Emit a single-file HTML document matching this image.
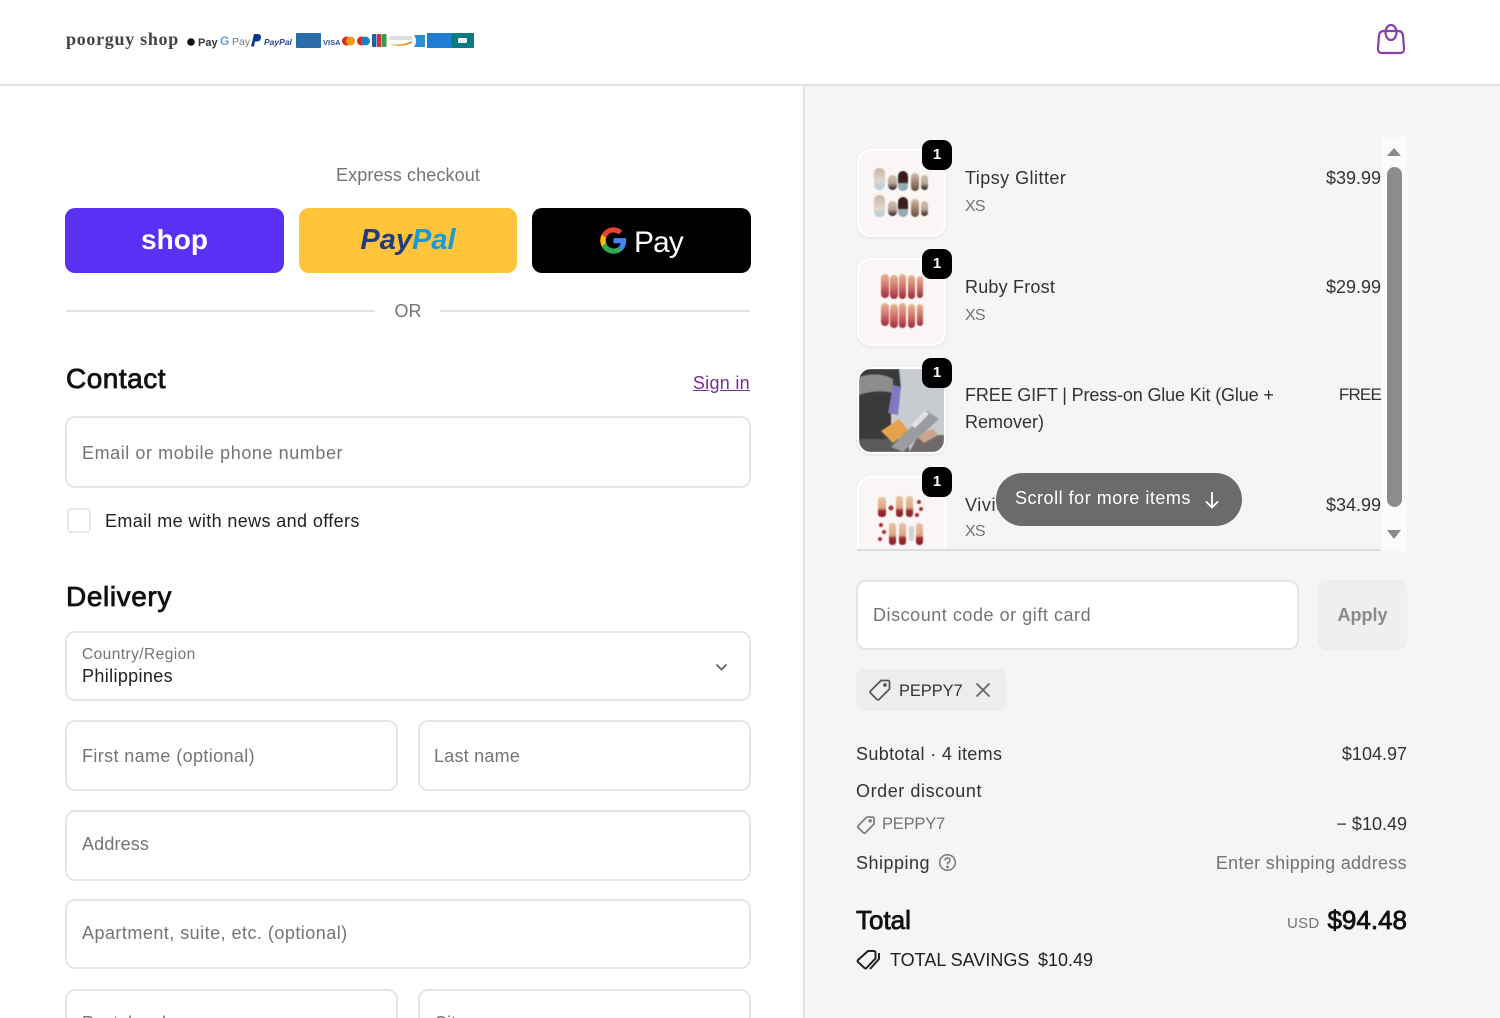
<!DOCTYPE html>
<html lang="en"><head><meta charset="utf-8"><title>Checkout</title>
<style>
html,body{margin:0;padding:0;width:1500px;height:1018px;overflow:hidden;background:#fff}
body{position:relative;font-family:"Liberation Sans",sans-serif;color:#222}
.a{position:absolute}
.t{position:absolute;white-space:nowrap;line-height:24px;font-size:18px;color:#333;filter:blur(.25px)}
.g{color:#747474}
.b{position:absolute;box-sizing:border-box;background:#fff;border:2px solid #e6e6e6;border-radius:10px}
.r{text-align:right}
.h{font-size:28px;color:#111;line-height:34px;-webkit-text-stroke:.8px #111}
.th{position:absolute;left:857px;width:89px;box-sizing:border-box;background:#fbf6f6;border:2px solid #fff;border-radius:14px;box-shadow:0 1px 3px #e2e2e2;overflow:hidden}
.th svg{display:block;filter:blur(.5px)}
.q{position:absolute;left:922px;width:30px;height:30px;background:#000;border-radius:9px;color:#fff;font-weight:700;font-size:15px;line-height:30px;text-align:center}
</style></head><body>

<div class="a" style="left:805px;top:84px;width:695px;height:934px;background:#f5f5f5"></div>
<div class="a" style="left:803px;top:84px;width:2px;height:934px;background:#e3e3e3"></div>
<div class="a" style="left:0;top:84px;width:1500px;height:2px;background:#e3e3e3"></div>

<!-- Header -->
<div class="t" style="left:66px;top:27px;font:700 18px/24px 'Liberation Serif',serif;color:#444;letter-spacing:.7px">poorguy shop</div>
<svg class="a" style="left:186px;top:30px" width="290" height="20" viewBox="0 0 290 20">
<circle cx="5" cy="12" r="3.8" fill="#111"/>
<text x="12" y="16" font-family="Liberation Sans" font-size="11" font-weight="700" fill="#333">Pay</text>
<text x="34" y="15" font-family="Liberation Sans" font-size="12" font-weight="700" fill="#6a9fd8">G</text>
<text x="46" y="15" font-family="Liberation Sans" font-size="10.500" fill="#777">Pay</text>
<path d="M68 4h4q3 0 3 3.500t-4 4h-2l-1 5h-3z" fill="#0a3a8f"/>
<text x="78" y="15" font-family="Liberation Sans" font-size="8.500" font-weight="700" font-style="italic" fill="#24449c">PayPal</text>
<rect x="110" y="3" width="25" height="15" rx="1" fill="#2a6ca8"/>
<text x="137" y="15" font-family="Liberation Sans" font-size="7.500" font-weight="700" fill="#2b4a9c">VISA</text>
<circle cx="160.500" cy="11" r="4.500" fill="#d9281f"/><circle cx="164.500" cy="11" r="4.500" fill="#f39a1d"/>
<circle cx="175.500" cy="11" r="4.500" fill="#d9281f"/><circle cx="179.500" cy="11" r="4.500" fill="#1a7fc8"/>
<rect x="186" y="4" width="4.500" height="13" rx="1" fill="#1f5fa8"/><rect x="191" y="4" width="4.500" height="13" rx="1" fill="#d32f3a"/><rect x="196" y="4" width="4.500" height="13" rx="1" fill="#3a9a4a"/>
<rect x="204" y="6" width="22" height="4" fill="#ddd"/><path d="M204 14q12 2 22-3v2q-12 5-22 1z" fill="#f08a24"/>
<path d="M228 5h11v12h-11q4-6 0-12z" fill="#2d8fd0"/>
<rect x="241" y="3" width="24" height="15" fill="#1f7fd6"/>
<rect x="265" y="3" width="23" height="15" rx="1" fill="#0b7a82"/><rect x="272" y="8" width="9" height="5" rx="1" fill="#e6f4f4"/>
</svg>
<svg class="a" style="left:1375px;top:23px" width="32" height="34" viewBox="0 0 32 34" fill="none" stroke="#8a3fae" stroke-width="2.200">
<path d="M9 8h14q4.500 0 5 4.500l1 13q.3 4.500-4 4.500H7q-4.300 0-4-4.500l1-13Q4.500 8 9 8z"/>
<ellipse cx="16" cy="9.500" rx="5.500" ry="7.500"/>
</svg>

<!-- Express -->
<div class="t g" style="left:66px;width:684px;text-align:center;top:163px;letter-spacing:.12px">Express checkout</div>
<div class="a" style="left:65px;top:208px;width:219px;height:65px;background:#5a31f4;border-radius:10px"></div>
<div class="t" style="left:65px;width:219px;text-align:center;top:222px;font-size:28px;line-height:36px;font-weight:700;color:#fff">shop</div>
<div class="a" style="left:299px;top:208px;width:218px;height:65px;background:#ffc439;border-radius:10px"></div>
<div class="t" style="left:299px;width:218px;text-align:center;top:222px;font-size:29px;line-height:36px;font-weight:700;font-style:italic;color:#253b80">Pay<span style="color:#179bd7">Pal</span></div>
<div class="a" style="left:532px;top:208px;width:219px;height:65px;background:#000;border-radius:10px"></div>
<svg class="a" style="left:599px;top:226px" width="29" height="29" viewBox="0 0 48 48">
<path fill="#4285f4" d="M45 24.500c0-1.600-.1-3-.4-4.500H24v8.500h11.800a10 10 0 0 1-4.400 6.600v5.500h7.100c4.200-3.800 6.500-9.500 6.500-16.100z"/>
<path fill="#34a853" d="M24 46c5.900 0 10.900-2 14.500-5.400l-7.100-5.500c-2 1.300-4.500 2.100-7.400 2.100-5.700 0-10.500-3.800-12.200-9H4.500v5.700A22 22 0 0 0 24 46z"/>
<path fill="#fbbc04" d="M11.800 28.200a13 13 0 0 1 0-8.400v-5.700H4.500a22 22 0 0 0 0 19.800z"/>
<path fill="#ea4335" d="M24 10.800c3.200 0 6.100 1.100 8.400 3.300l6.300-6.300A22 22 0 0 0 4.500 14.100l7.300 5.700c1.700-5.200 6.500-9 12.200-9z"/>
</svg>
<div class="t" style="left:634px;top:224px;font-size:30px;line-height:38px;color:#fff;letter-spacing:-1px">Pay</div>

<div class="a" style="left:66px;top:310px;width:309px;height:2px;background:#e3e3e3"></div>
<div class="a" style="left:440px;top:310px;width:310px;height:2px;background:#e3e3e3"></div>
<div class="t g" style="left:66px;width:684px;text-align:center;top:299px">OR</div>

<!-- Contact -->
<div class="t h" style="left:66px;top:362px;letter-spacing:.5px">Contact</div>
<div class="t" style="right:750px;top:371px;color:#7b2d9e;text-decoration:underline;letter-spacing:.3px">Sign in</div>
<div class="b" style="left:65px;top:416px;width:686px;height:72px"></div>
<div class="t g" style="left:82px;top:441px;letter-spacing:.57px">Email or mobile phone number</div>
<div class="a" style="left:67px;top:508px;width:24px;height:25px;box-sizing:border-box;border:2px solid #e8e8e8;border-radius:4px;background:#fff"></div>
<div class="t" style="left:105px;top:509px;color:#222;letter-spacing:.38px">Email me with news and offers</div>

<!-- Delivery -->
<div class="t h" style="left:66px;top:580px;letter-spacing:.6px">Delivery</div>
<div class="b" style="left:65px;top:631px;width:686px;height:70px"></div>
<div class="t g" style="left:82px;top:643px;font-size:15.500px;letter-spacing:.43px">Country/Region</div>
<div class="t" style="left:82px;top:664px;color:#222;letter-spacing:.36px">Philippines</div>
<svg class="a" style="left:714px;top:661px" width="15" height="13" viewBox="0 0 15 13" fill="none" stroke="#666" stroke-width="1.800"><path d="M2.500 3.500l5 5 5-5"/></svg>
<div class="b" style="left:65px;top:720px;width:333px;height:71px"></div>
<div class="t g" style="left:82px;top:744px;letter-spacing:.38px">First name (optional)</div>
<div class="b" style="left:418px;top:720px;width:333px;height:71px"></div>
<div class="t g" style="left:434px;top:744px;letter-spacing:.22px">Last name</div>
<div class="b" style="left:65px;top:810px;width:686px;height:71px"></div>
<div class="t g" style="left:82px;top:832px;letter-spacing:.15px">Address</div>
<div class="b" style="left:65px;top:899px;width:686px;height:70px"></div>
<div class="t g" style="left:82px;top:921px;letter-spacing:.47px">Apartment, suite, etc. (optional)</div>
<div class="b" style="left:65px;top:989px;width:333px;height:71px"></div>
<div class="t g" style="left:82px;top:1011px">Postal code</div>
<div class="b" style="left:418px;top:989px;width:333px;height:71px"></div>
<div class="t g" style="left:434px;top:1011px">City</div>

<!-- Scroll list -->
<div class="a" style="left:1381px;top:137px;width:26px;height:414px;background:#fbfbfb"></div>
<svg class="a" style="left:1381px;top:137px" width="26" height="414" viewBox="0 0 26 414"><path d="M6 19L13 11L20 19z" fill="#8a8a8a"/><path d="M6 393L13 402L20 393z" fill="#8a8a8a"/></svg>
<div class="a" style="left:1387px;top:167px;width:15px;height:340px;background:#8c8c8c;border-radius:8px"></div>
<div class="a" style="left:857px;top:549px;width:524px;height:2px;background:#dcdcdc"></div>

<svg width="0" height="0" style="position:absolute"><defs>
<linearGradient id="n1" x1="0" y1="0" x2="0" y2="1"><stop offset="0" stop-color="#c9b5a4"/><stop offset=".6" stop-color="#e2d6cc"/><stop offset="1" stop-color="#a9cfe0"/></linearGradient>
<linearGradient id="n2" x1="0" y1="0" x2="0" y2="1"><stop offset="0" stop-color="#d0bfb0"/><stop offset=".55" stop-color="#b9a596"/><stop offset="1" stop-color="#1e1a18"/></linearGradient>
<linearGradient id="n3" x1="0" y1="0" x2="0" y2="1"><stop offset="0" stop-color="#3a1d1a"/><stop offset=".55" stop-color="#3a1d1a"/><stop offset=".65" stop-color="#9ab0bb"/><stop offset="1" stop-color="#8ba6b3"/></linearGradient>
<linearGradient id="n4" x1="0" y1="0" x2="0" y2="1"><stop offset="0" stop-color="#d2bfae"/><stop offset="1" stop-color="#6d4a38"/></linearGradient>
<linearGradient id="r" x1="0" y1="0" x2="0" y2="1"><stop offset="0" stop-color="#eab593"/><stop offset=".5" stop-color="#d0736a"/><stop offset="1" stop-color="#a1283a"/></linearGradient>
<linearGradient id="v" x1="0" y1="0" x2="0" y2="1"><stop offset="0" stop-color="#e8c4a4"/><stop offset=".55" stop-color="#dba988"/><stop offset=".7" stop-color="#9c2a2c"/><stop offset="1" stop-color="#8a2230"/></linearGradient>
</defs></svg>

<div class="th" style="top:149px;height:88px"><svg width="85" height="84" viewBox="0 0 85 84">
<rect x="15" y="17" width="11" height="22" rx="5" fill="url(#n1)"/><rect x="29" y="24" width="9" height="15" rx="4.500" fill="url(#n2)"/><rect x="39" y="20" width="10" height="20" rx="5" fill="url(#n3)"/><rect x="52" y="22" width="8" height="18" rx="4" fill="url(#n4)"/><rect x="62" y="24" width="7" height="15" rx="3.500" fill="url(#n2)"/>
<rect x="15" y="44" width="11" height="22" rx="5" fill="url(#n1)"/><rect x="29" y="50" width="9" height="15" rx="4.500" fill="url(#n2)"/><rect x="39" y="46" width="10" height="20" rx="5" fill="url(#n3)"/><rect x="52" y="48" width="8" height="18" rx="4" fill="url(#n4)"/><rect x="62" y="50" width="7" height="15" rx="3.500" fill="url(#n2)"/>
</svg></div>
<div class="th" style="top:258px;height:88px"><svg width="85" height="84" viewBox="0 0 85 84">
<g fill="url(#r)"><rect x="22" y="14" width="8" height="24" rx="4"/><rect x="31" y="15" width="8" height="24" rx="4"/><rect x="40" y="14" width="7" height="25" rx="3.500"/><rect x="49" y="15" width="7" height="24" rx="3.500"/><rect x="58" y="16" width="6" height="22" rx="3"/>
<rect x="22" y="43" width="8" height="23" rx="4"/><rect x="31" y="44" width="8" height="24" rx="4"/><rect x="40" y="43" width="7" height="25" rx="3.500"/><rect x="49" y="44" width="7" height="24" rx="3.500"/><rect x="58" y="44" width="6" height="22" rx="3"/></g>
</svg></div>
<div class="th" style="top:367px;height:87px;background:#c9cdd0"><svg width="85" height="83" viewBox="0 0 85 83">
<rect width="85" height="83" fill="#c8ccd0"/>
<path d="M0 0h40l2 20-10 22v30H0z" fill="#3a3a3a"/><path d="M0 8q20-6 34 2v14q-16-4-34 2z" fill="#8d8d8d"/>
<path d="M0 70h50v13H0z" fill="#5a5a5a"/>
<path d="M60 66h25v17H50z" fill="#70696a"/><path d="M56 66l18-6 5 6-14 8z" fill="#c9a48f"/>
<path d="M22 62L40 50l10 12-16 12z" fill="#e4a24a"/>
<path d="M32 78L68 42l12 8-36 33z" fill="#9a9c9f"/><path d="M52 56l14-14 4 3-14 14z" fill="#e2e2e2"/>
<path d="M29 44l5-28 8 2-3 28z" fill="#7f79c4"/>
</svg></div>
<div class="a" style="left:857px;top:476px;width:89px;height:73px;overflow:hidden"><div class="th" style="left:0;top:0;height:90px"><svg width="85" height="71" viewBox="0 0 85 71">
<g fill="url(#v)"><rect x="19" y="19" width="8" height="20" rx="3"/><rect x="37" y="18" width="7" height="21" rx="3"/><rect x="47" y="18" width="7" height="21" rx="3"/><rect x="30" y="45" width="7" height="22" rx="3"/><rect x="40" y="45" width="7" height="22" rx="3"/><rect x="57" y="45" width="7" height="22" rx="3"/></g>
<g fill="#a82c30"><circle cx="32" cy="30" r="2.500"/><circle cx="60" cy="24" r="2"/><circle cx="62" cy="31" r="2"/><circle cx="58" cy="37" r="2"/><circle cx="22" cy="47" r="2"/><circle cx="25" cy="54" r="2"/><circle cx="21" cy="61" r="2"/></g>
<rect x="50" y="48" width="5" height="15" rx="2.500" fill="#cfcfcf"/>
</svg></div></div>
<div class="q" style="top:140px">1</div><div class="q" style="top:249px">1</div><div class="q" style="top:358px">1</div><div class="q" style="top:467px">1</div>

<div class="t" style="left:965px;top:166px;letter-spacing:.46px">Tipsy Glitter</div>
<div class="t g" style="left:965px;top:195px;font-size:16px;letter-spacing:-.8px">XS</div>
<div class="t r" style="right:119px;top:166px">$39.99</div>
<div class="t" style="left:965px;top:275px;letter-spacing:.2px">Ruby Frost</div>
<div class="t g" style="left:965px;top:304px;font-size:16px;letter-spacing:-.8px">XS</div>
<div class="t r" style="right:119px;top:275px">$29.99</div>
<div class="t" style="left:965px;top:383px;letter-spacing:-.14px">FREE GIFT | Press-on Glue Kit (Glue +</div>
<div class="t" style="left:965px;top:410px">Remover)</div>
<div class="t r" style="right:119px;top:383px;font-size:17px;letter-spacing:-.8px">FREE</div>
<div class="t" style="left:965px;top:493px;letter-spacing:.6px">Vivid</div>
<div class="t g" style="left:965px;top:520px;font-size:16px;letter-spacing:-.8px">XS</div>
<div class="t r" style="right:119px;top:493px">$34.99</div>

<div class="a" style="left:996px;top:473px;width:246px;height:53px;background:#6b6b6b;border-radius:27px"></div>
<div class="t" style="left:1015px;top:486px;color:#fff;letter-spacing:.52px">Scroll for more items</div>
<svg class="a" style="left:1203px;top:490px" width="18" height="20" viewBox="0 0 18 20" fill="none" stroke="#fff" stroke-width="1.800"><path d="M9 2v15M3 11.500l6 6 6-6"/></svg>

<!-- Discount -->
<div class="b" style="left:856px;top:580px;width:443px;height:70px"></div>
<div class="t g" style="left:873px;top:603px;letter-spacing:.54px">Discount code or gift card</div>
<div class="a" style="left:1318px;top:580px;width:89px;height:70px;box-sizing:border-box;background:#efefef;border:1px solid #ebebeb;border-radius:10px"></div>
<div class="t" style="left:1318px;width:89px;text-align:center;top:603px;color:#8a8a8a;font-weight:700">Apply</div>

<div class="a" style="left:856px;top:669px;width:150px;height:42px;background:#ededed;border-radius:8px"></div>
<svg class="a" style="left:868px;top:678px" width="24" height="24" viewBox="0 0 24 24" fill="none" stroke="#555" stroke-width="1.700"><path d="M13 2.500h7a1.500 1.500 0 0 1 1.500 1.500v7L11 21.500a1.500 1.500 0 0 1-2 0L2.500 15a1.500 1.500 0 0 1 0-2z"/><circle cx="17" cy="7" r="1" fill="#555"/></svg>
<div class="t" style="left:899px;top:679px;font-size:16.500px;letter-spacing:-.1px">PEPPY7</div>
<svg class="a" style="left:974px;top:681px" width="18" height="18" viewBox="0 0 18 18" fill="none" stroke="#666" stroke-width="1.800"><path d="M2.500 2.500l13 13M15.500 2.500l-13 13"/></svg>

<!-- Totals -->
<div class="t" style="left:856px;top:742px;letter-spacing:.35px">Subtotal · 4 items</div>
<div class="t r" style="right:93px;top:742px">$104.97</div>
<div class="t" style="left:856px;top:779px;letter-spacing:.57px">Order discount</div>
<svg class="a" style="left:856px;top:815px" width="20" height="20" viewBox="0 0 24 24" fill="none" stroke="#777" stroke-width="2"><path d="M13 2.500h7a1.500 1.500 0 0 1 1.500 1.500v7L11 21.500a1.500 1.500 0 0 1-2 0L2.500 15a1.500 1.500 0 0 1 0-2z"/><circle cx="17" cy="7" r="1" fill="#777"/></svg>
<div class="t g" style="left:882px;top:812px;font-size:16.500px;letter-spacing:-.2px">PEPPY7</div>
<div class="t r" style="right:93px;top:812px">− $10.49</div>
<div class="t" style="left:856px;top:851px;letter-spacing:.5px">Shipping</div>
<svg class="a" style="left:938px;top:853px" width="19" height="19" viewBox="0 0 19 19" fill="none" stroke="#777" stroke-width="1.500"><circle cx="9.500" cy="9.500" r="7.800"/><path d="M7 7.500q0-2.500 2.500-2.500t2.500 2.300q0 1.500-2.500 2.700v1.500"/><circle cx="9.500" cy="14" r=".6" fill="#777"/></svg>
<div class="t g r" style="right:93px;top:851px;letter-spacing:.32px">Enter shipping address</div>
<div class="t h" style="left:856px;top:903px;font-size:26px">Total</div>
<div class="t g" style="left:1287px;top:912px;font-size:15px;letter-spacing:.3px">USD</div>
<div class="t h r" style="right:93px;top:903px;font-size:26px">$94.48</div>
<svg class="a" style="left:856px;top:949px" width="26" height="22" viewBox="0 0 26 22" fill="none" stroke="#222" stroke-width="2"><path d="M12 2h6a1.500 1.500 0 0 1 1.500 1.500v6L10.500 19a1.500 1.500 0 0 1-2 0L2 13a1.500 1.500 0 0 1 0-2z"/><path d="M23 4v6L14 20"/></svg>
<div class="t" style="left:890px;top:948px;color:#222">TOTAL SAVINGS</div>
<div class="t" style="left:1038px;top:948px;color:#222">$10.49</div>

</body></html>
